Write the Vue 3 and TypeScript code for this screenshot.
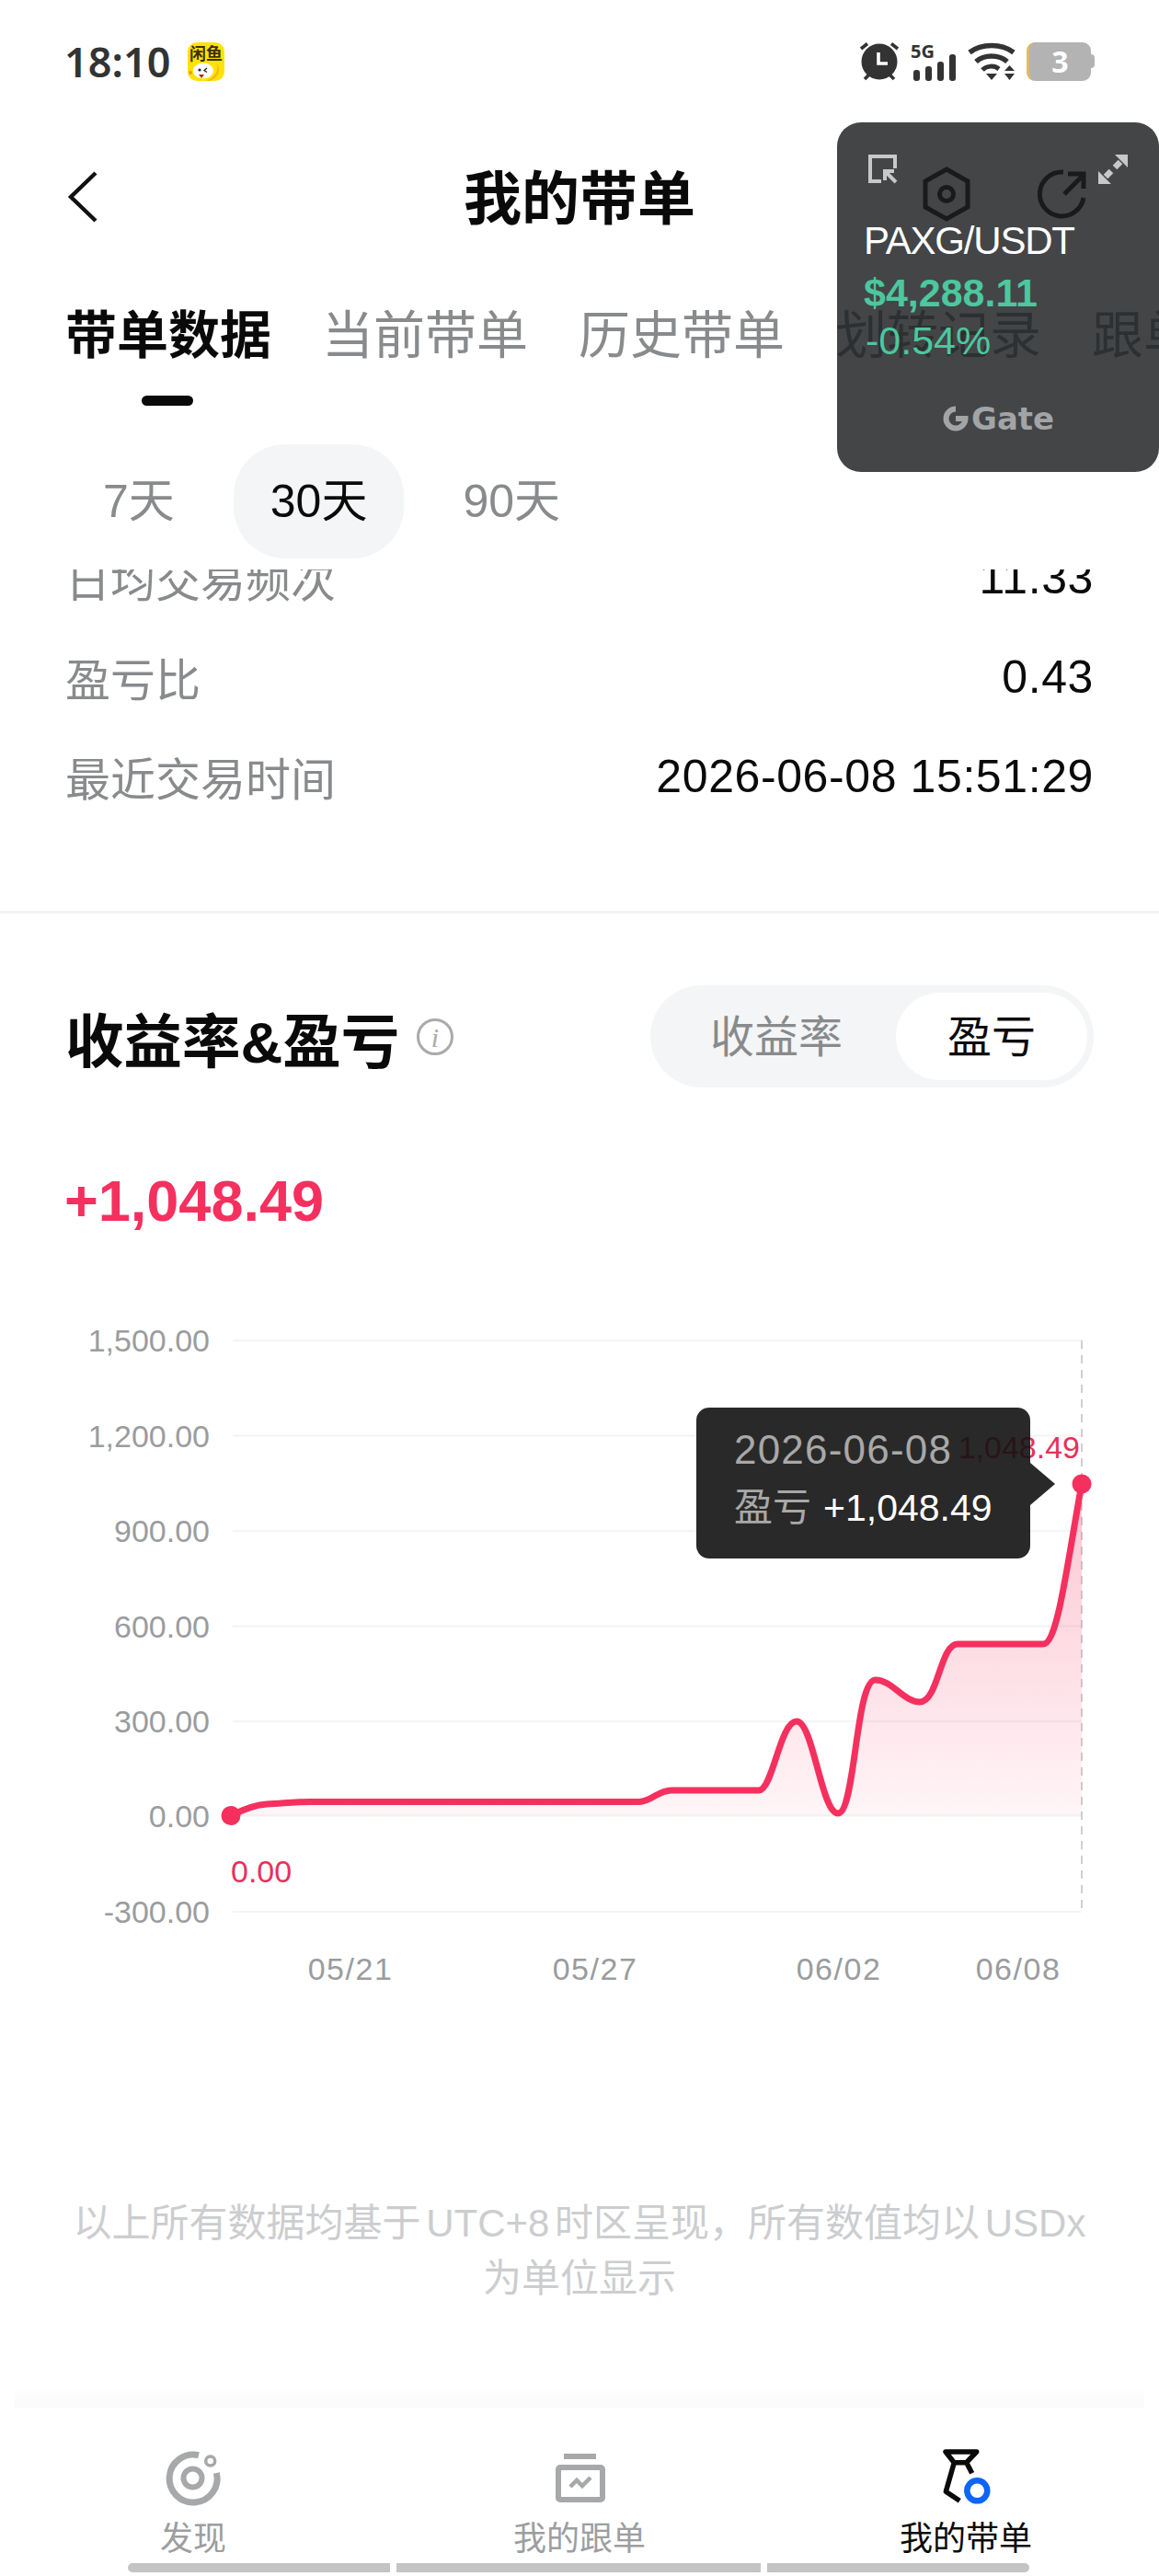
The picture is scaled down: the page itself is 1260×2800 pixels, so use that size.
<template>
  <div class="screen">
    <!-- status bar -->
    <div class="status">
      <div class="status__left">
        <span class="status__time">18:10</span>
        <svg class="app-icon" width="40" height="42" viewBox="0 0 40 42">
          <rect width="40" height="42" rx="10" fill="#ffe20a" />
          <text x="20" y="19" text-anchor="middle" class="app-icon__text">闲鱼</text>
          <path d="M24 42 C34 38 37 30 31 22 C35 30 30 38 20 42 Z" fill="#fbb80e" />
          <ellipse cx="17" cy="31" rx="11" ry="8.5" fill="#fff" />
          <circle cx="3" cy="33" r="2" fill="#f59a1c" />
          <circle cx="13" cy="30" r="1.6" fill="#222" />
          <path d="M21 28 L18 30.5 L21 32.5" fill="none" stroke="#222" stroke-width="1.3" />
          <path d="M12 35 H18 L15 39 Z" fill="#b3261e" />
        </svg>
      </div>
      <div class="status__right">
        <svg width="44" height="42" viewBox="0 0 44 42">
          <circle cx="22" cy="21" r="19.5" fill="#333" />
          <path d="M21 11 V23 H31" fill="none" stroke="#fff" stroke-width="3.6" />
          <path d="M2 7 L9 1.5 M35 1.5 L42 7 M6 40 L11 35 M38 40 L33 35" stroke="#333" stroke-width="3.6" />
        </svg>
        <svg width="50" height="42" viewBox="0 0 50 42">
          <text x="0" y="17" class="status__net">5G</text>
          <rect x="3" y="30" width="7" height="12" rx="3" fill="#333" />
          <rect x="16" y="26" width="7" height="16" rx="3" fill="#333" />
          <rect x="29" y="21" width="7" height="21" rx="3" fill="#333" />
          <rect x="42" y="13" width="7" height="29" rx="3" fill="#333" />
        </svg>
        <svg width="52" height="42" viewBox="0 0 52 42">
          <path d="M2 11 C15 1 37 1 50 11" fill="none" stroke="#333" stroke-width="5.5" />
          <path d="M9 21 C18 13 34 13 43 21" fill="none" stroke="#333" stroke-width="5.5" />
          <path d="M16 30 C21 25 29 25 34 29" fill="none" stroke="#333" stroke-width="5" />
          <path d="M20 34 H32 L26 41 Z M40 31 L45.5 25 L51 31 Z M40 34 H51 L45.5 41 Z" fill="#333" />
        </svg>
        <div class="battery">3</div>
      </div>
    </div>

    <!-- title bar -->
    <div class="nav">
      <svg class="nav__back" width="34" height="60" viewBox="0 0 34 60">
        <path d="M31 4 L4 30 L31 56" fill="none" stroke="#111" stroke-width="4.4" />
      </svg>
      <span class="nav__title">我的带单</span>
      <svg class="nav__hex" width="56" height="64" viewBox="0 0 56 64">
        <path d="M28 4 L51 17 V45 L28 58 L5 45 V17 Z" fill="none" stroke="#111" stroke-width="5" />
        <circle cx="28" cy="31" r="7.5" fill="none" stroke="#111" stroke-width="5" />
      </svg>
      <svg class="nav__share" width="64" height="64" viewBox="0 0 64 64">
        <path d="M31 6 A24 24 0 1 0 53 34" fill="none" stroke="#111" stroke-width="5" />
        <path d="M32 30 L52 10 M36 8 H53 V24" fill="none" stroke="#111" stroke-width="5" />
      </svg>
    </div>

    <!-- tabs -->
    <div class="tabs">
      <span
        v-for="(tab, i) in tabs"
        :key="tab"
        class="tabs__item"
        :class="{ 'tabs__item--active': i === 0 }"
      >{{ tab }}</span>
    </div>

    <div class="periods">
      <span
        v-for="(p, i) in periods"
        :key="p"
        class="periods__item"
        :class="{ 'periods__item--active': i === 1 }"
      >{{ p }}</span>
    </div>

    <!-- scrolled stats, first row is cut off by the sticky header -->
    <div class="stats">
      <div v-for="row in stats" :key="row.label" class="stats__row">
        <span class="stats__label">{{ row.label }}</span>
        <span class="stats__value">{{ row.value }}</span>
      </div>
    </div>
    <div class="divider"></div>

    <div class="head">
      <div class="head__title">
        <strong>收益率&amp;盈亏</strong>
        <svg width="44" height="44" viewBox="0 0 44 44">
          <circle cx="22" cy="22" r="18.5" fill="none" stroke="#aaa" stroke-width="3" />
          <text x="22" y="33" text-anchor="middle" class="head__info">i</text>
        </svg>
      </div>
      <div class="toggle">
        <span class="toggle__item">收益率</span>
        <span class="toggle__item toggle__item--active">盈亏</span>
      </div>
    </div>

    <div class="amount">+1,048.49</div>

    <!-- chart, drawn in page coordinates through the viewBox -->
    <div class="chart">
      <svg width="1260" height="760" viewBox="0 1420 1260 760">
        <defs>
          <linearGradient id="area" x1="0" y1="0" x2="0" y2="1">
            <stop offset="0" stop-color="#f5305f" stop-opacity="0.28" />
            <stop offset="1" stop-color="#f5305f" stop-opacity="0.05" />
          </linearGradient>
        </defs>
        <g v-for="t in yTicks" :key="t.label">
          <line x1="253" x2="1176" :y1="t.y" :y2="t.y" stroke="#f4f4f5" stroke-width="2" />
          <text x="228" :y="t.y + 12" text-anchor="end" class="chart__axis">{{ t.label }}</text>
        </g>
        <text
          v-for="t in xTicks"
          :key="t.label"
          :x="t.x"
          y="2152"
          text-anchor="middle"
          class="chart__axis chart__axis--x"
        >{{ t.label }}</text>
        <line x1="1176" x2="1176" y1="1457" y2="2078" stroke="#cfcfcf" stroke-width="2" stroke-dasharray="9 7" />
        <path :d="`${line} L1176 1973.5 Z`" fill="url(#area)" />
        <path :d="line" fill="none" stroke="#f5305f" stroke-width="7" />
        <circle cx="251" cy="1973.5" r="10.5" fill="#f5305f" />
        <circle cx="1176" cy="1613" r="10.5" fill="#f5305f" />
        <text x="251" y="2046" class="chart__mark">0.00</text>
        <text x="1174" y="1585" text-anchor="end" class="chart__mark">1,048.49</text>
      </svg>
      <div class="tip">
        <div class="tip__date">2026-06-08</div>
        <div class="tip__row"><span class="tip__key">盈亏</span><span class="tip__val">+1,048.49</span></div>
      </div>
    </div>

    <p class="note">以上所有数据均基于 UTC+8 时区呈现，所有数值均以 USDx 为单位显示</p>

    <!-- bottom tab bar -->
    <div class="bottom">
      <div class="bottom__fade"></div>
      <div class="bottom__items">
        <div class="bottom__item">
          <svg width="70" height="70" viewBox="0 0 70 70">
            <path d="M41 8.7 A26 26 0 1 0 60.4 28" fill="none" stroke="#a6a8aa" stroke-width="7" />
            <circle cx="34.5" cy="33.5" r="10" fill="none" stroke="#a6a8aa" stroke-width="6" />
            <circle cx="53.7" cy="15" r="5" fill="none" stroke="#a6a8aa" stroke-width="3.5" />
          </svg>
          <span>发现</span>
        </div>
        <div class="bottom__item">
          <svg width="70" height="70" viewBox="0 0 70 70">
            <rect x="18" y="7" width="35" height="6" fill="#a6a8aa" />
            <rect x="12" y="22" width="48" height="35" rx="2" fill="none" stroke="#a6a8aa" stroke-width="6" />
            <path d="M25 43 L32 36 L38 42 L47 33" fill="none" stroke="#a6a8aa" stroke-width="4.5" />
          </svg>
          <span>我的跟单</span>
        </div>
        <div class="bottom__item bottom__item--active">
          <svg width="70" height="70" viewBox="0 0 70 70">
            <path
              d="M13 5 H46.7 L35.7 16.7 H22.3 Z M22.3 16.7 L13.3 48.3 L28.3 58.3 M35.7 16.7 L41.7 28.3"
              fill="none"
              stroke="#0a0a0a"
              stroke-width="5.5"
              stroke-linejoin="round"
            />
            <circle cx="47.3" cy="47.3" r="11" fill="#fff" stroke="#0d66f5" stroke-width="6.5" />
          </svg>
          <span>我的带单</span>
        </div>
      </div>
      <div class="bottom__bars">
        <i class="bottom__bar bottom__bar--a"></i>
        <i class="bottom__bar bottom__bar--b"></i>
        <i class="bottom__bar bottom__bar--c"></i>
      </div>
    </div>

    <!-- floating price window from another app, lies over the header -->
    <div class="float">
      <div class="float__tools">
        <svg width="34" height="34" viewBox="0 0 34 34">
          <path d="M30 16 V3 H3 V30 H15" fill="none" stroke="#c8c8c8" stroke-width="4" />
          <path d="M31 31 L21 21 M19 29 V19 H29" fill="none" stroke="#c8c8c8" stroke-width="4" />
        </svg>
        <svg width="34" height="34" viewBox="0 0 34 34">
          <path d="M19 1 H33 V15 Z M1 19 V33 H15 Z" fill="#c8c8c8" />
          <path d="M25 9 L19 15 M9 25 L15 19" stroke="#c8c8c8" stroke-width="6.5" />
        </svg>
      </div>
      <div class="float__symbol">PAXG/USDT</div>
      <div class="float__price">$4,288.11</div>
      <div class="float__change">-0.54%</div>
      <div class="float__brand">
        <svg width="28" height="28" viewBox="0 0 28 28">
          <path d="M14 3.5 A10.5 10.5 0 1 0 24.5 14 H14" fill="none" stroke="#a2a4a6" stroke-width="6" />
        </svg>
        <span>Gate</span>
      </div>
    </div>
  </div>
</template>

<script setup lang="ts">
const tabs = ['带单数据', '当前带单', '历史带单', '划转记录', '跟单']
const periods = ['7天', '30天', '90天']

const stats = [
  { label: '日均交易频次', value: '11.33' },
  { label: '盈亏比', value: '0.43' },
  { label: '最近交易时间', value: '2026-06-08 15:51:29' },
]

const yTicks = [
  { label: '1,500.00', y: 1457 },
  { label: '1,200.00', y: 1560.5 },
  { label: '900.00', y: 1664 },
  { label: '600.00', y: 1767.5 },
  { label: '300.00', y: 1871 },
  { label: '0.00', y: 1973.5 },
  { label: '-300.00', y: 2078 },
]

const xTicks = [
  { label: '05/21', x: 381 },
  { label: '05/27', x: 647 },
  { label: '06/02', x: 912 },
  { label: '06/08', x: 1107 },
]

const line =
  'M251 1973.5 C262 1968 275 1962 290 1961 C310 1960 320 1958.5 339 1958.5 L695 1958.5 ' +
  'C708 1958.5 715 1946 730 1946 L825 1946 C840 1946 848 1871 866 1871 C884 1871 893 1971 911 1971 ' +
  'C930 1971 930 1826 951.6 1826 C970 1826 982 1850 1000 1850 C1020 1850 1022 1787 1041 1787 ' +
  'L1134 1787 C1150 1787 1160 1700 1176 1613'
</script>

<style>
html,
body {
  margin: 0;
  background: #fff;
}
</style>

<style scoped>
.screen {
  position: relative;
  width: 1260px;
  height: 2800px;
  overflow: hidden;
  display: flex;
  flex-direction: column;
  background: #fff;
  font-family: "Liberation Sans", "Noto Sans CJK SC", sans-serif;
  color: #0a0a0a;
}
.status {
  flex: none;
  height: 134px;
  padding: 0 70px 0 70px;
  display: flex;
  align-items: center;
  justify-content: space-between;
  box-sizing: border-box;
}
.status__left {
  display: flex;
  align-items: center;
  gap: 19px;
}
.status__time {
  font-family: "Noto Sans", sans-serif;
  font-weight: 600;
  font-size: 45px;
  line-height: 56px;
  color: #333;
}
.app-icon__text {
  font-family: "Noto Sans CJK SC", sans-serif;
  font-size: 18px;
  font-weight: 700;
  fill: #3a3000;
}
.status__right {
  display: flex;
  align-items: center;
  gap: 12px;
}
.status__net {
  font-family: "Noto Sans", sans-serif;
  font-weight: 700;
  font-size: 20px;
  fill: #333;
}
.battery {
  position: relative;
  width: 70px;
  height: 42px;
  margin-right: 4px;
  box-sizing: border-box;
  border-left: 3px solid #e3bb5f;
  border-radius: 9px;
  background: #b3b3b3;
  color: #fff;
  font-family: "Noto Sans", sans-serif;
  font-weight: 700;
  font-size: 32px;
  line-height: 42px;
  text-align: center;
}
.battery::after {
  content: "";
  position: absolute;
  right: -4px;
  top: 13px;
  width: 4px;
  height: 15px;
  border-radius: 0 4px 4px 0;
  background: #b3b3b3;
}
.nav {
  position: relative;
  flex: none;
  height: 160px;
  display: flex;
  align-items: center;
  justify-content: center;
}
.nav__back {
  position: absolute;
  left: 73px;
  top: 50px;
}
.nav__title {
  padding-top: 4px;
  font-size: 63px;
  font-weight: 700;
  line-height: 80px;
}
.nav__hex {
  position: absolute;
  left: 1001px;
  top: 46px;
}
.nav__share {
  position: absolute;
  left: 1125px;
  top: 47px;
}
.tabs {
  flex: none;
  height: 150px;
  box-sizing: border-box;
  padding: 31px 0 0 71px;
  display: flex;
  gap: 55px;
  white-space: nowrap;
  font-size: 56px;
  line-height: 80px;
  color: #888a8c;
}
.tabs__item {
  position: relative;
  flex: none;
}
.tabs__item--active {
  color: #0a0a0a;
  font-weight: 700;
}
.tabs__item--active::after {
  content: "";
  position: absolute;
  left: 83px;
  top: 105px;
  width: 56px;
  height: 11px;
  border-radius: 6px;
  background: #0a0a0a;
}
.periods {
  flex: none;
  margin: 39px 0 0 72px;
  display: flex;
  gap: 24px;
}
.periods__item {
  padding: 0 40px;
  height: 124px;
  border-radius: 56px;
  font-size: 50px;
  line-height: 124px;
  color: #888a8c;
}
.periods__item--active {
  background: #f4f5f6;
  color: #0a0a0a;
}
.stats {
  flex: none;
  height: 371px;
  margin-top: 12px;
  overflow: hidden;
}
.stats__row {
  height: 108px;
  padding: 0 71px;
  display: flex;
  align-items: center;
  justify-content: space-between;
}
.stats__row:first-child {
  margin-top: -45px;
}
.stats__label {
  padding-bottom: 2px;
  font-size: 49px;
  color: #888a8c;
}
.stats__value {
  font-size: 50px;
  letter-spacing: 0.6px;
  color: #0a0a0a;
}
.divider {
  flex: none;
  height: 3px;
  background: #f3f3f4;
}
.head {
  flex: none;
  margin-top: 78px;
  height: 111px;
  padding: 0 71px;
  display: flex;
  align-items: center;
  justify-content: space-between;
}
.head__title {
  display: flex;
  align-items: center;
  gap: 17px;
  font-size: 63.5px;
}
.head__info {
  font-family: "Liberation Serif", serif;
  font-style: italic;
  font-size: 30px;
  fill: #aaa;
}
.toggle {
  box-sizing: border-box;
  width: 482px;
  height: 111px;
  padding: 8px 7px;
  border-radius: 56px;
  background: #f4f5f6;
  display: flex;
  align-items: center;
}
.toggle__item {
  flex: 1;
  height: 95px;
  border-radius: 48px;
  font-size: 48px;
  line-height: 97px;
  text-align: center;
  color: #888a8c;
}
.toggle__item--active {
  flex: none;
  width: 208px;
  background: #fff;
  color: #0a0a0a;
}
.amount {
  flex: none;
  margin: 83px 0 0 70px;
  font-size: 63px;
  font-weight: 700;
  line-height: 80px;
  color: #f5305f;
}
.chart {
  position: relative;
  flex: none;
  height: 760px;
  margin-top: 75px;
}
.chart svg {
  display: block;
}
.chart__axis {
  font-size: 34px;
  fill: #9a9c9e;
}
.chart__axis--x {
  letter-spacing: 1.5px;
}
.chart__mark {
  font-size: 34px;
  fill: #e8305c;
}
.tip {
  position: absolute;
  left: 757px;
  top: 110px;
  width: 363px;
  height: 164px;
  box-sizing: border-box;
  padding: 14px 0 0 41px;
  border-radius: 14px;
  background: rgba(18, 18, 18, 0.9);
  font-size: 42px;
  line-height: 63px;
  white-space: nowrap;
}
.tip::after {
  content: "";
  position: absolute;
  left: 100%;
  top: 60px;
  border-left: 27px solid rgba(18, 18, 18, 0.9);
  border-top: 23px solid transparent;
  border-bottom: 23px solid transparent;
}
.tip__date {
  font-size: 44px;
  letter-spacing: 1.2px;
  color: #a8a8a8;
}
.tip__key {
  color: #a8a8a8;
}
.tip__val {
  margin-left: 13px;
  font-size: 41px;
  color: #fff;
}
.note {
  flex: none;
  margin: 207px 60px 0;
  font-size: 42px;
  line-height: 60px;
  word-spacing: -6px;
  text-align: center;
  color: #cccdcf;
}
.bottom {
  flex: none;
  margin-top: auto;
}
.bottom__fade {
  height: 23px;
  margin: 0 16px;
  background: linear-gradient(#fff, #fafafa);
}
.bottom__items {
  display: grid;
  grid-template-columns: repeat(3, 1fr);
  padding-top: 43px;
}
.bottom__item {
  display: flex;
  flex-direction: column;
  align-items: center;
  font-size: 36px;
  line-height: 44px;
  color: #9c9ea0;
}
.bottom__item svg {
  display: block;
  margin-bottom: 8px;
}
.bottom__item--active {
  color: #0a0a0a;
}
.bottom__bars {
  margin-top: 4px;
  padding: 0 0 4px 139px;
  display: flex;
  gap: 7px;
}
.bottom__bar {
  height: 10px;
  background: #c4c4c4;
}
.bottom__bar--a {
  width: 285px;
  border-radius: 5px 0 0 5px;
}
.bottom__bar--b {
  width: 396px;
}
.bottom__bar--c {
  width: 285px;
  border-radius: 0 5px 5px 0;
}
.float {
  position: absolute;
  left: 910px;
  top: 133px;
  width: 350px;
  height: 380px;
  box-sizing: border-box;
  padding: 34px 33px 0 29px;
  border-radius: 26px;
  background: rgba(26, 28, 30, 0.82);
}
.float__tools {
  height: 34px;
  padding-left: 4px;
  display: flex;
  justify-content: space-between;
}
.float__symbol {
  margin-top: 36px;
  font-size: 42px;
  line-height: 50px;
  letter-spacing: -1.2px;
  color: #fff;
}
.float__price {
  margin-top: 6px;
  font-size: 43px;
  font-weight: 700;
  line-height: 50px;
  color: #4cc79e;
}
.float__change {
  margin-top: 2px;
  padding-left: 2px;
  font-size: 43px;
  line-height: 50px;
  color: #4cc79e;
}
.float__brand {
  margin-top: 40px;
  height: 40px;
  padding-left: 86px;
  display: flex;
  align-items: center;
  gap: 3px;
  font-family: "DejaVu Sans", sans-serif;
  font-weight: 700;
  font-size: 34px;
  color: #a2a4a6;
}
</style>
